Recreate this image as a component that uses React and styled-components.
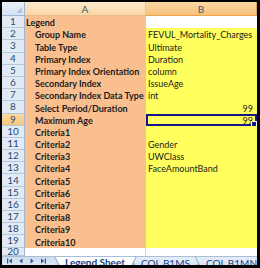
import React from 'react';
import styled, { createGlobalStyle } from 'styled-components';

const Global = createGlobalStyle`
  html, body { margin: 0; padding: 0; background: #000; }
  body { width: 260px; height: 268px; overflow: hidden; font-family: Lato, "Open Sans", sans-serif; }
`;

const Frame = styled.div`
  width: 260px;
  height: 268px;
  box-sizing: border-box;
  padding: 2px 3px 3px 2px;
  background: #000;
`;

const Sheet = styled.div`
  height: 100%;
  background: #fff;
  display: flex;
  flex-direction: column;
  overflow: hidden;
`;

const Grid = styled.div`
  flex: 1;
  min-height: 0;
  display: grid;
  grid-template-columns: 23px 121px 1fr;
  grid-template-rows: 14px repeat(19, 12.2px) 1fr;
`;

const Corner = styled.div`
  position: relative;
  background: linear-gradient(#e9eff8, #d7e3f2);
  border-right: 1px solid #9eb6ce;
  border-bottom: 1px solid #9eb6ce;
  box-sizing: border-box;
`;

const CornerMark = styled.div`
  position: absolute;
  right: 2px;
  bottom: 2px;
  width: 0;
  height: 0;
  border-left: 6px solid transparent;
  border-bottom: 6px solid #b4c6dc;
`;

const ColHead = styled.div`
  display: flex;
  align-items: center;
  justify-content: center;
  font-size: 10px;
  color: #3d5674;
  box-sizing: border-box;
  border-right: 1px solid ${p => (p.$hot ? '#e2a659' : '#e8c899')};
  border-bottom: 1px solid ${p => (p.$hot ? '#e9a44d' : '#e8bf86')};
  background: ${p =>
    p.$hot
      ? 'linear-gradient(#fbd9a3, #f6c27a)'
      : 'linear-gradient(#fdeacd, #f9d7a6)'};
`;

const RowHead = styled.div`
  display: flex;
  align-items: center;
  justify-content: center;
  font-size: 10px;
  color: #2c4a6e;
  box-sizing: border-box;
  border-right: 1px solid #9eb6ce;
  border-bottom: 1px solid #b6c8dc;
  background: ${p => (p.$hot ? 'linear-gradient(#fbd8a0, #f7c47d)' : '#e2eaf6')};
  overflow: hidden;
  line-height: 11px;
`;

const Cell = styled.div`
  display: flex;
  align-items: flex-end;
  justify-content: ${p => (p.$num ? 'flex-end' : 'flex-start')};
  box-sizing: border-box;
  overflow: hidden;
  white-space: nowrap;
  font-size: 9px;
  line-height: 11px;
  color: #1b1b1b;
  position: relative;
  background: ${p => p.$bg};
  padding: 0 ${p => (p.$num ? '4px' : '0')} 0 ${p => p.$indent}px;
  font-weight: ${p => (p.$bold ? 700 : 400)};
  box-shadow: ${p => (p.$selected ? 'inset 0 0 0 2px #17178a' : 'none')};
  border-right: ${p => (p.$grid ? '1px solid #d0d7e5' : 'none')};
`;

const FillHandle = styled.div`
  position: absolute;
  right: 0;
  bottom: -1px;
  width: 4px;
  height: 4px;
  background: #17178a;
  border: 1px solid #fff;
`;

const TabBar = styled.div`
  height: 9px;
  flex: none;
  display: flex;
  align-items: flex-start;
  overflow: hidden;
  background: linear-gradient(#cfdcee, #dbe6f4);
  border-top: 1px solid #a9bfd6;
  box-sizing: border-box;
`;

const Nav = styled.div`
  display: flex;
  align-items: center;
  gap: 5px;
  padding: 1px 0 0 5px;
  width: 52px;
  flex: none;
  box-sizing: border-box;
`;

const Tab = styled.div`
  position: relative;
  z-index: ${p => (p.$active ? 2 : 1)};
  margin-left: ${p => (p.$first ? '0' : '-7px')};
  margin-top: ${p => (p.$active ? '-1px' : '0')};
  height: 16px;
  padding: 0 1px 1px;
  background: #93acc9;
  clip-path: polygon(0 0, 100% 0, calc(100% - 8px) 100%, 8px 100%);
  flex: none;
`;

const TabFace = styled.div`
  height: 100%;
  padding: 0 11px 0 10px;
  clip-path: polygon(0 0, 100% 0, calc(100% - 8px) 100%, 8px 100%);
  background: ${p => (p.$active ? '#fff' : 'linear-gradient(#e6edf7, #cfdcef)')};
  font-size: 10px;
  line-height: 13px;
  color: #15428b;
  font-weight: ${p => (p.$active ? 700 : 400)};
  white-space: nowrap;
`;

const InsertIcon = styled.div`
  margin: 2px 3px 0 auto;
  flex: none;
  display: flex;
`;

const rows = [
  { a: 'Legend', title: true },
  { a: 'Group Name', b: 'FEVUL_Mortality_Charges' },
  { a: 'Table Type', b: 'Ultimate' },
  { a: 'Primary Index', b: 'Duration' },
  { a: 'Primary Index Orientation', b: 'column' },
  { a: 'Secondary Index', b: 'IssueAge' },
  { a: 'Secondary Index Data Type', b: 'int' },
  { a: 'Select Period/Duration', b: '99', num: true },
  { a: 'Maximum Age', b: '99', num: true, selected: true },
  { a: 'Criteria1' },
  { a: 'Criteria2', b: 'Gender' },
  { a: 'Criteria3', b: 'UWClass' },
  { a: 'Criteria4', b: 'FaceAmountBand' },
  { a: 'Criteria5' },
  { a: 'Criteria6' },
  { a: 'Criteria7' },
  { a: 'Criteria8' },
  { a: 'Criteria9' },
  { a: 'Criteria10' },
];

const PEACH = '#fabf8f';
const YELLOW = '#ffff5e';

const NavIcon = ({ kind }) => {
  const c = '#2a5a9c';
  return (
    <svg width="6" height="6" viewBox="0 0 6 6">
      {kind === 'first' && (
        <>
          <rect x="0" y="0.5" width="1.2" height="5" fill={c} />
          <path d="M5 0.5 L1.8 3 L5 5.5 Z" fill={c} />
        </>
      )}
      {kind === 'prev' && <path d="M4.5 0.5 L1.3 3 L4.5 5.5 Z" fill={c} />}
      {kind === 'next' && <path d="M1.5 0.5 L4.7 3 L1.5 5.5 Z" fill={c} />}
      {kind === 'last' && (
        <>
          <path d="M1 0.5 L4.2 3 L1 5.5 Z" fill={c} />
          <rect x="4.8" y="0.5" width="1.2" height="5" fill={c} />
        </>
      )}
    </svg>
  );
};

export default function App() {
  return (
    <>
      <Global />
      <Frame>
        <Sheet>
          <Grid>
            <Corner>
              <CornerMark />
            </Corner>
            <ColHead>A</ColHead>
            <ColHead $hot>B</ColHead>
            {rows.map((r, i) => (
              <React.Fragment key={i}>
                <RowHead $hot={r.selected}>{i + 1}</RowHead>
                <Cell $bg={PEACH} $bold $indent={r.title ? 1 : 10}>
                  {r.a}
                </Cell>
                <Cell
                  $bg={r.title ? '#fff' : YELLOW}
                  $indent={2}
                  $num={r.num}
                  $selected={r.selected}
                >
                  {r.b || ''}
                  {r.selected && <FillHandle />}
                </Cell>
              </React.Fragment>
            ))}
            <RowHead>20</RowHead>
            <Cell $bg="#fff" $grid $indent={0} />
            <Cell $bg="#fff" $indent={0} />
          </Grid>
          <TabBar>
            <Nav>
              <NavIcon kind="first" />
              <NavIcon kind="prev" />
              <NavIcon kind="next" />
              <NavIcon kind="last" />
            </Nav>
            <Tab $active $first>
              <TabFace $active>Legend Sheet</TabFace>
            </Tab>
            <Tab>
              <TabFace>COI_B1MS</TabFace>
            </Tab>
            <Tab>
              <TabFace>COI_B1MN</TabFace>
            </Tab>
            <InsertIcon>
              <svg width="6" height="6" viewBox="0 0 6 6">
                <circle cx="3" cy="3" r="2.3" fill="#f0a53a" />
                <circle cx="3" cy="3" r="1" fill="#fde3a8" />
              </svg>
            </InsertIcon>
          </TabBar>
        </Sheet>
      </Frame>
    </>
  );
}
